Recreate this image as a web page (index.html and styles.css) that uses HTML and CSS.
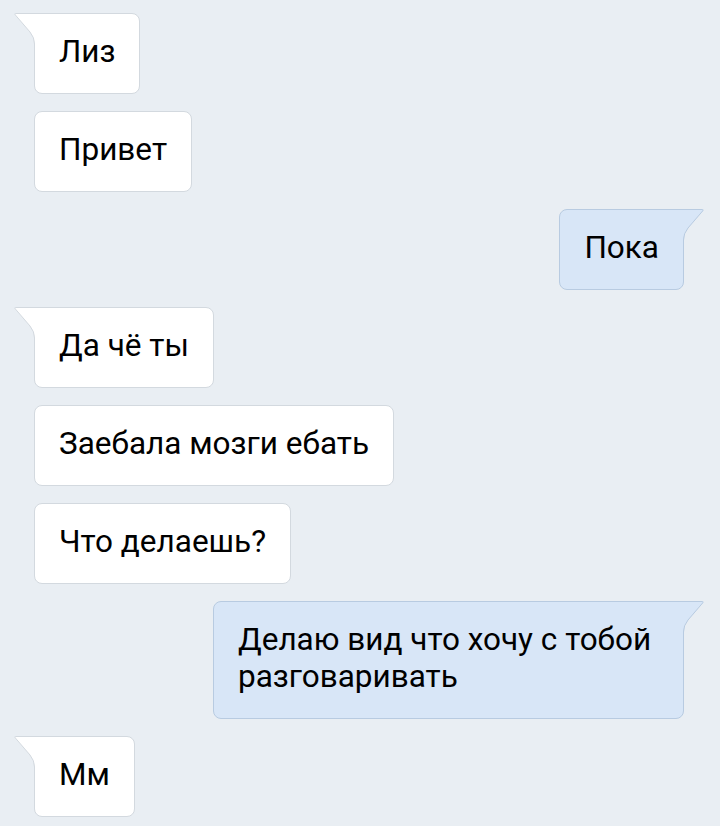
FILE: index.html
```html
<!DOCTYPE html>
<html lang="ru">
<head>
<meta charset="utf-8">
<link rel="stylesheet" href="styles.css">
</head>
<body>
<div class="chat">
  <div class="msg in tail">Лиз<svg class="tail-svg" width="22" height="34" viewBox="0 0 22 34"><path class="tf" d="M1 0.5 L22 0.5 L22 34 L20.5 34 L20.5 31 Q20.5 24.5 16 19 L1 2 Z"/><path class="ts" d="M22 0.5 L1.8 0.5 Q0.2 0.5 1.2 1.8 L16 19 Q20.5 24.5 20.5 31 L20.5 34"/></svg></div>
  <div class="msg in">Привет</div>
  <div class="msg out tail">Пока<svg class="tail-svg" width="22" height="34" viewBox="0 0 22 34"><path class="tf" d="M1 0.5 L22 0.5 L22 34 L20.5 34 L20.5 31 Q20.5 24.5 16 19 L1 2 Z"/><path class="ts" d="M22 0.5 L1.8 0.5 Q0.2 0.5 1.2 1.8 L16 19 Q20.5 24.5 20.5 31 L20.5 34"/></svg></div>
  <div class="msg in tail">Да чё ты<svg class="tail-svg" width="22" height="34" viewBox="0 0 22 34"><path class="tf" d="M1 0.5 L22 0.5 L22 34 L20.5 34 L20.5 31 Q20.5 24.5 16 19 L1 2 Z"/><path class="ts" d="M22 0.5 L1.8 0.5 Q0.2 0.5 1.2 1.8 L16 19 Q20.5 24.5 20.5 31 L20.5 34"/></svg></div>
  <div class="msg in">Заебала мозги ебать</div>
  <div class="msg in">Что делаешь?</div>
  <div class="msg out tail wide">Делаю вид что хочу с тобой разговаривать<svg class="tail-svg" width="22" height="34" viewBox="0 0 22 34"><path class="tf" d="M1 0.5 L22 0.5 L22 34 L20.5 34 L20.5 31 Q20.5 24.5 16 19 L1 2 Z"/><path class="ts" d="M22 0.5 L1.8 0.5 Q0.2 0.5 1.2 1.8 L16 19 Q20.5 24.5 20.5 31 L20.5 34"/></svg></div>
  <div class="msg in tail">Мм<svg class="tail-svg" width="22" height="34" viewBox="0 0 22 34"><path class="tf" d="M1 0.5 L22 0.5 L22 34 L20.5 34 L20.5 31 Q20.5 24.5 16 19 L1 2 Z"/><path class="ts" d="M22 0.5 L1.8 0.5 Q0.2 0.5 1.2 1.8 L16 19 Q20.5 24.5 20.5 31 L20.5 34"/></svg></div>
</div>
</body>
</html>
```
FILE: styles.css
```css
html, body {
  margin: 0;
  padding: 0;
  background: #e9eef3;
}
body {
  width: 720px;
  height: 826px;
  overflow: hidden;
  font-family: Roboto, "Noto Sans", sans-serif;
  color: #000;
}
.chat {
  display: flex;
  flex-direction: column;
  gap: 17px;
  padding: 13px 36px 0 34px;
}
.msg {
  position: relative;
  box-sizing: border-box;
  font-size: 31.5px;
  line-height: 37px;
  padding: 19px 24px 23px;
  border-radius: 8px;
  border: 1px solid #d3d9df;
  max-width: 471px;
}
.msg.in {
  align-self: flex-start;
  background: #fff;
}
.msg.out {
  align-self: flex-end;
  background: #d8e6f7;
  border-color: #b8cbe1;
}
.msg.in.tail { border-top-left-radius: 0; }
.msg.out.tail { border-top-right-radius: 0; }
.tail-svg {
  position: absolute;
  top: -1px;
  left: -21px;
}
.msg.out .tail-svg {
  left: auto;
  right: -21px;
  transform: scaleX(-1);
}
.tf { fill: #fff; }
.ts { fill: none; stroke: #d3d9df; stroke-width: 1; }
.msg.out .tf { fill: #d8e6f7; }
.msg.out .ts { stroke: #b8cbe1; }
.msg.wide { width: 471px; }
```
